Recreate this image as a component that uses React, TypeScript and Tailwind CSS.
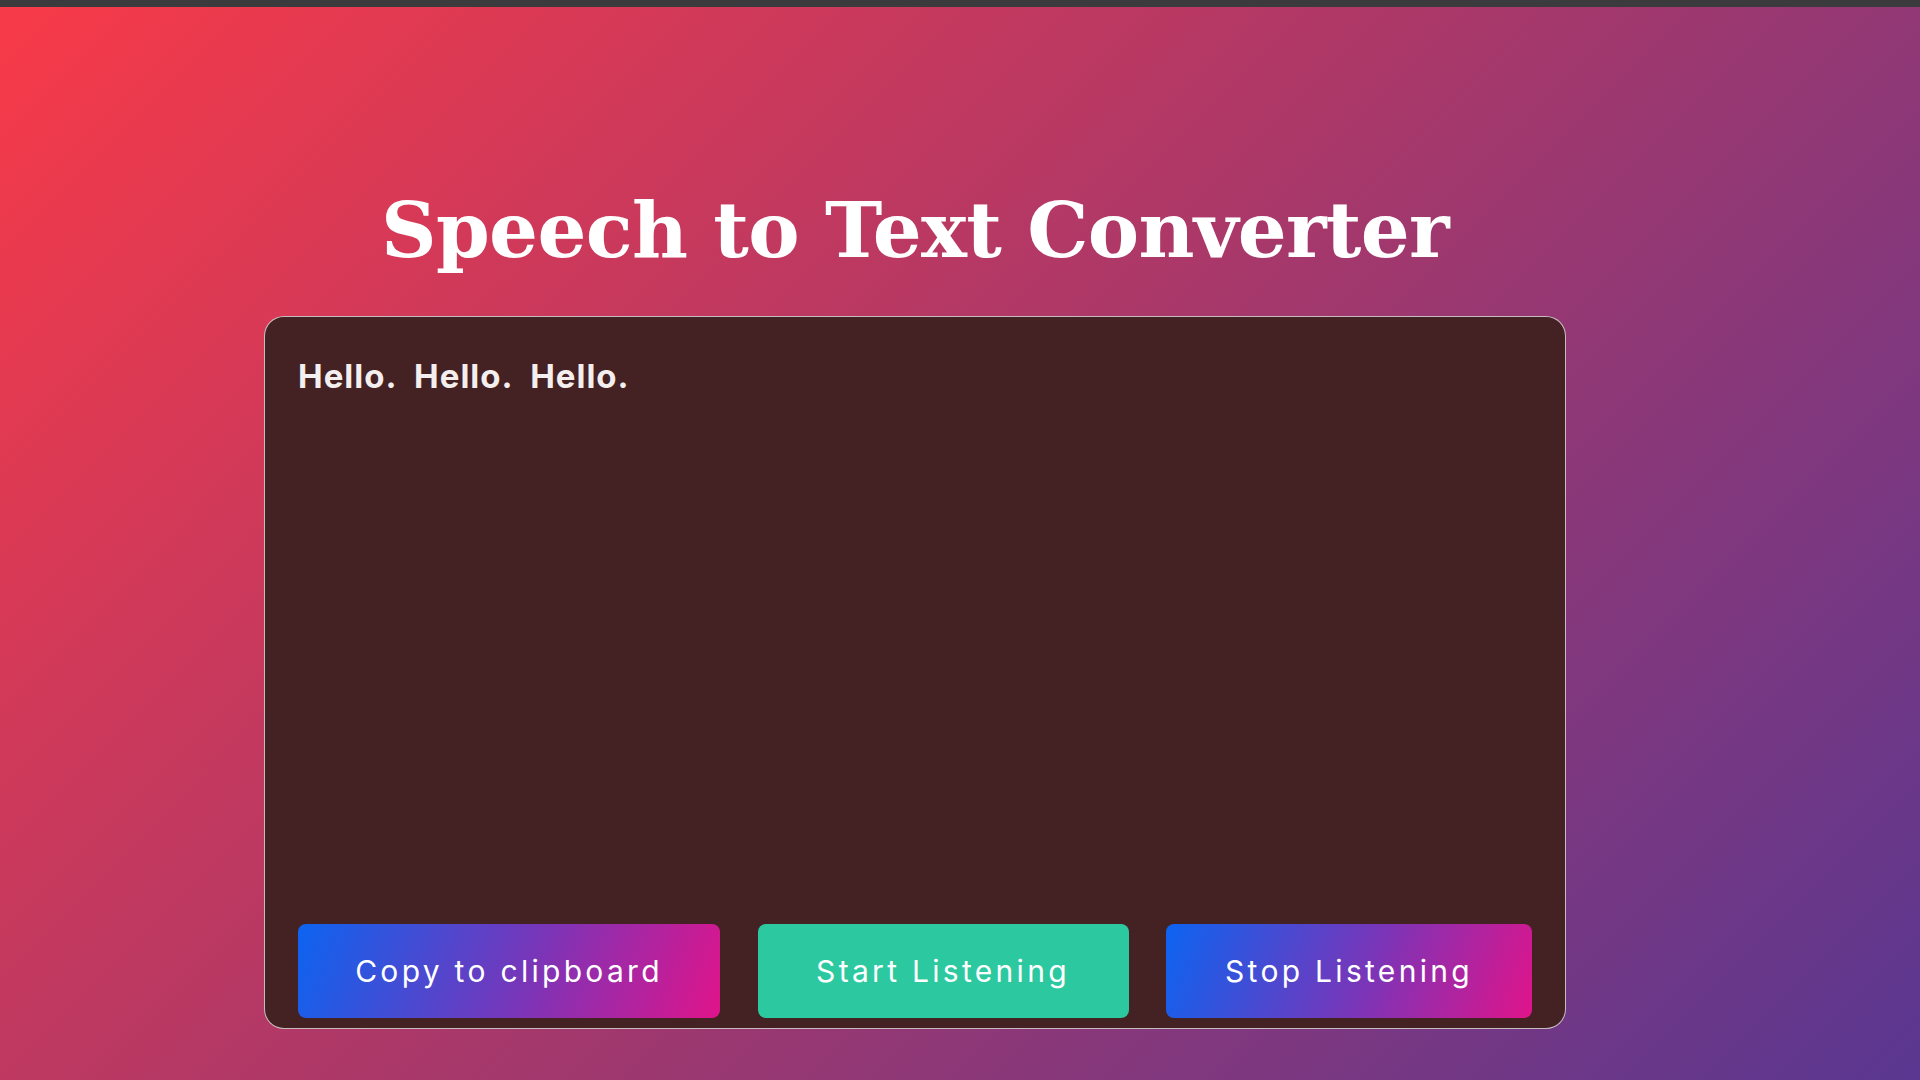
import React from 'react';

const transcript = 'Hello.  Hello.  Hello.';

export default function App() {
  return (
    <div className="min-h-screen h-[1080px] flex flex-col bg-[linear-gradient(135deg,#f83a48_0%,#a8386a_50%,#5a3791_100%)] overflow-hidden">
      {/* window top strip */}
      <div className="h-[7px] bg-[#3b3a3c] shrink-0" />

      <div className="ml-[264px] w-[1302px] flex flex-col items-center">
        <h1 className="mt-[171px] text-[77px] leading-[104px] font-bold text-white tracking-[-0.7px] [font-family:'DejaVu_Serif',serif]">
          Speech to Text Converter
        </h1>

        {/* transcript card */}
        <div className="mt-[34px] w-full h-[713px] flex flex-col rounded-[20px] border-[1.5px] border-white/70 bg-[#442123] px-[33px] pt-[35px] pb-[10px]">
          <p className="flex-1 whitespace-pre-wrap text-[33px] tracking-[1px] font-bold text-[#f4eeee] [font-family:Inter,'Noto_Sans',sans-serif]">
            {transcript}
          </p>

          <div className="flex justify-between items-center">
            <button className="w-[422px] h-[94px] rounded-[8px] bg-[linear-gradient(110deg,#0c64f1,#7a35b8_55%,#e0148a)] text-[30px] tracking-[3.3px] text-white [font-family:Inter,'Noto_Sans',sans-serif]">
              Copy to clipboard
            </button>
            <button className="w-[371px] h-[94px] rounded-[8px] bg-[#2cc9a1] text-[30px] tracking-[3.3px] text-white [font-family:Inter,'Noto_Sans',sans-serif]">
              Start Listening
            </button>
            <button className="w-[366px] h-[94px] rounded-[8px] bg-[linear-gradient(110deg,#0c64f1,#7a35b8_55%,#e0148a)] text-[30px] tracking-[3.3px] text-white [font-family:Inter,'Noto_Sans',sans-serif]">
              Stop Listening
            </button>
          </div>
        </div>
      </div>
    </div>
  );
}
